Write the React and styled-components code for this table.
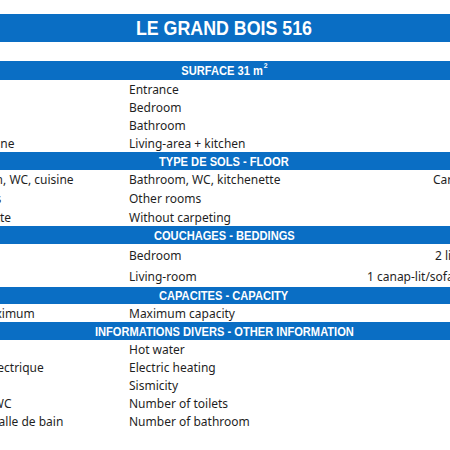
import styled, { createGlobalStyle } from "styled-components";

const GlobalStyle = createGlobalStyle`
  html, body {
    margin: 0;
    padding: 0;
    background: #ffffff;
    overflow: hidden;
  }
  body {
    width: 450px;
    height: 450px;
  }
`;

const BLUE = "#0a6ec4";

const Sheet = styled.div`
  width: 620px;
  margin-left: -76px;
  padding-top: 14px;
  font-family: "Noto Sans", "Liberation Sans", sans-serif;
  font-size: 12px;
  color: #1f1f1f;
`;

const Band = styled.div`
  height: ${(p) => p.$h || 18}px;
  background: ${BLUE};
  color: #fff;
  display: flex;
  align-items: center;
  justify-content: center;
  padding-left: 76px;
  width: 450px;
  font-family: "Liberation Sans", Arial, sans-serif;
  font-weight: 700;
  font-size: ${(p) => (p.$big ? 20 : 13)}px;
  white-space: nowrap;
`;

// Excel's narrow bold face, approximated by squeezing Arial-metric bold
const Narrow = styled.span`
  display: inline-block;
  transform: scaleX(${(p) => (p.$big ? 0.89 : 0.855)});
  margin-left: -2px;

  sup {
    font-size: 8px;
    margin-left: 1px;
    position: relative;
    top: -2px;
  }
`;

const Spacer = styled.div`
  height: 19px;
`;

const Row = styled.div`
  display: grid;
  grid-template-columns: 203px 240px 1fr;
  height: ${(p) => p.$h || 18}px;
  align-items: center;
  white-space: nowrap;
`;

const Cell = styled.div`
  padding-left: 2px;
`;

const Value = styled.div`
  padding-left: ${(p) => p.$at || 0}px;
`;

const sections = [
  {
    title: (
      <>
        SURFACE 31 m<sup>2</sup>
      </>
    ),
    h: 19,
    rows: [
      ["Entrée", "Entrance"],
      ["Chambre", "Bedroom"],
      ["Salle de bain", "Bathroom"],
      ["Séjour + cuisine", "Living-area + kitchen"],
    ],
  },
  {
    title: "TYPE DE SOLS - FLOOR",
    rows: [
      ["Salles de bain, WC, cuisine", "Bathroom, WC, kitchenette", "Carrelage", 66, 19],
      ["Autres pièces", "Other rooms", "", 0, 19],
      ["Sans moquette", "Without carpeting"],
    ],
  },
  {
    title: "COUCHAGES - BEDDINGS",
    rows: [
      ["Chambre", "Bedroom", "2 lits", 68, 22],
      ["Séjour", "Living-room", "1 canap-lit/sofa-bed", 0, 21],
    ],
  },
  {
    title: "CAPACITES - CAPACITY",
    h: 17,
    rows: [["Capacité maximum", "Maximum capacity"]],
  },
  {
    title: "INFORMATIONS DIVERS - OTHER INFORMATION",
    rows: [
      ["Eau chaude", "Hot water"],
      ["Chauffage électrique", "Electric heating"],
      ["Sismicité", "Sismicity"],
      ["Nombre de WC", "Number of toilets"],
      ["Nombre de salle de bain", "Number of bathroom"],
    ],
  },
];

export default function App() {
  return (
    <>
      <GlobalStyle />
      <Sheet>
        <Band $h={28} $big>
          <Narrow $big>LE GRAND BOIS 516</Narrow>
        </Band>
        <Spacer />
        {sections.map((s, i) => (
          <div key={i}>
            <Band $h={s.h}>
              <Narrow>{s.title}</Narrow>
            </Band>
            {s.rows.map(([fr, en, val, at, h], j) => (
              <Row key={j} $h={h}>
                <Cell>{fr}</Cell>
                <Cell>{en}</Cell>
                <Value $at={at}>{val}</Value>
              </Row>
            ))}
          </div>
        ))}
      </Sheet>
    </>
  );
}
